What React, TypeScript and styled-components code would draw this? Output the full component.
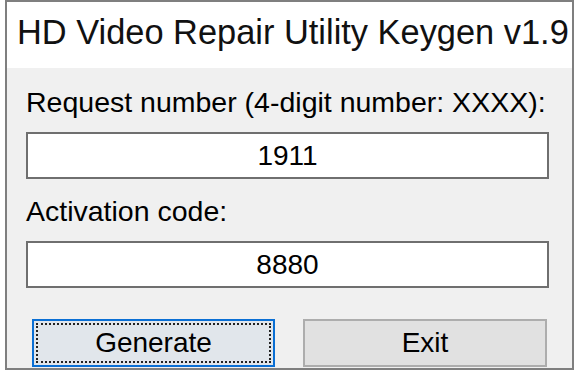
import React from 'react';
import styled, { createGlobalStyle } from 'styled-components';

const GlobalStyle = createGlobalStyle`
  html, body {
    margin: 0;
    padding: 0;
    background: #ffffff;
  }
  body {
    font-family: "Liberation Sans", Arial, sans-serif;
    color: #000;
  }
`;

const Window = styled.div`
  box-sizing: border-box;
  width: 569px;
  height: 370px;
  margin-left: 5px;
  border: 2px solid #7f7f7f;
  display: flex;
  flex-direction: column;
  background: #ffffff;
`;

const TitleBar = styled.div`
  box-sizing: border-box;
  height: 66px;
  padding: 11px 0 0 10px;
  background: #ffffff;
  font-size: 34.4px;
  color: #111;
  white-space: nowrap;
`;

const Body = styled.div`
  flex: 1;
  background: #f0f0f0;
  padding: 18px 23px 0 19px;
  display: flex;
  flex-direction: column;
`;

const Label = styled.div<{ $top: number }>`
  margin-top: ${({ $top }) => $top}px;
  font-size: 28.5px;
  line-height: 32px;
  white-space: nowrap;
`;

const Field = styled.input`
  box-sizing: border-box;
  width: 523px;
  height: 47px;
  margin-top: 14px;
  border: 2px solid #6f6f6f;
  background: #ffffff;
  font-family: inherit;
  font-size: 28px;
  color: #000;
  text-align: center;
  padding: 0;
  outline: none;
`;

const ButtonRow = styled.div`
  display: grid;
  grid-template-columns: 243px 244px;
  column-gap: 28px;
  margin-top: 31px;
  padding-left: 6px;
`;

const Button = styled.button<{ $focused?: boolean }>`
  box-sizing: border-box;
  height: 48px;
  font-family: inherit;
  font-size: 28px;
  color: #000;
  background: ${({ $focused }) => ($focused ? '#e1e6eb' : '#e1e1e1')};
  border: 2px solid ${({ $focused }) => ($focused ? '#0a6fd4' : '#adadad')};
  outline: ${({ $focused }) => ($focused ? '2px dotted #222' : 'none')};
  outline-offset: -6px;
  padding: 0;
  cursor: pointer;
`;

const App: React.FC = () => {
  return (
    <>
      <GlobalStyle />
      <Window>
        <TitleBar>HD Video Repair Utility Keygen v1.9</TitleBar>
        <Body>
          <Label $top={0}>Request number (4-digit number: XXXX):</Label>
          <Field readOnly value="1911" />
          <Label $top={16}>Activation code:</Label>
          <Field readOnly value="8880" />
          <ButtonRow>
            <Button $focused>Generate</Button>
            <Button>Exit</Button>
          </ButtonRow>
        </Body>
      </Window>
    </>
  );
};

export default App;
